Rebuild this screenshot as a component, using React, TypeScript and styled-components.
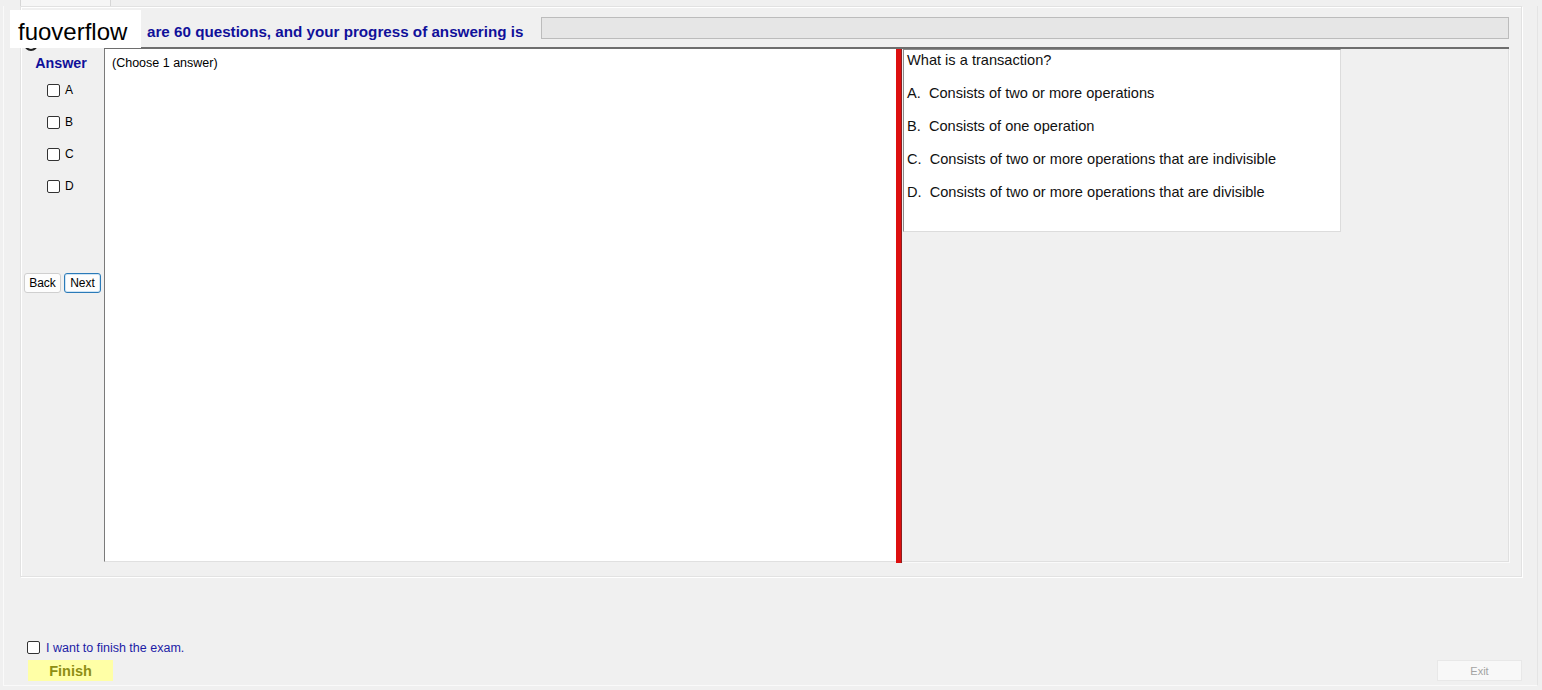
import React from "react";
import styled, { createGlobalStyle } from "styled-components";

const GlobalStyle = createGlobalStyle`
  html, body {
    margin: 0;
    padding: 0;
    background: #f0f0f0;
  }
  body {
    font-family: "Liberation Sans", Arial, sans-serif;
    color: #000;
  }
`;

const Screen = styled.div`
  position: relative;
  width: 1542px;
  height: 690px;
  background: #f0f0f0;
  overflow: hidden;
`;

const TabStrip = styled.div`
  height: 6px;
  display: flex;
`;

const Tab = styled.div`
  margin-left: 20px;
  width: 89px;
  height: 6px;
  background: #f6f6f6;
  border-left: 1px solid #d6d6d6;
  border-right: 1px solid #d6d6d6;
`;

const Shell = styled.div`
  margin-left: 3px;
  width: 1535px;
  height: 680px;
  box-sizing: border-box;
  padding: 0 15px 0 16px;
  border-left: 1px solid #fafafa;
  border-right: 1px solid #e4e4e4;
  border-bottom: 1px solid #fafafa;
  display: flex;
  flex-direction: column;
`;

const Group = styled.div`
  width: 1502px;
  height: 571px;
  box-sizing: border-box;
  border: 1px solid #e2e2e2;
  box-shadow: inset 1px 1px 0 #fff, 1px 1px 0 #fff;
  display: flex;
  flex-direction: column;
`;

const HeaderRow = styled.div`
  margin-top: 10px;
  height: 22px;
  display: flex;
  align-items: stretch;
`;

const Title = styled.div`
  width: 520px;
  box-sizing: border-box;
  padding: 4px 0 0 126px;
  white-space: nowrap;
  font-weight: bold;
  font-size: 15.2px;
  line-height: 22px;
  color: #10109a;
`;

const Progress = styled.div`
  flex: 1;
  margin-right: 12px;
  box-sizing: border-box;
  background: #e6e6e6;
  border: 1px solid #bcbcbc;
`;

const Body = styled.div`
  margin-top: 8px;
  height: 515px;
  display: flex;
`;

const AnswerColumn = styled.div`
  width: 83px;
  display: flex;
  flex-direction: column;
`;

const AnswerHeading = styled.div`
  margin-top: 8px;
  padding-right: 3px;
  text-align: center;
  font-weight: bold;
  font-size: 14.3px;
  line-height: 16px;
  color: #10109a;
`;

const OptionList = styled.div`
  margin-top: 3px;
  display: flex;
  flex-direction: column;
`;

const OptionRow = styled.label`
  height: 32px;
  padding-left: 26px;
  display: flex;
  align-items: center;
  gap: 5px;
  font-size: 12px;
  color: #000;
`;

const Box = styled.span`
  display: inline-block;
  width: 11px;
  height: 11px;
  border: 1px solid #333;
  border-radius: 2px;
  background: #fff;
`;

const NavRow = styled.div`
  margin-top: 71px;
  padding-left: 3px;
  display: flex;
  gap: 3px;
`;

const NavButton = styled.button<{ $focused?: boolean }>`
  width: 37px;
  height: 20px;
  padding: 0;
  box-sizing: border-box;
  font-family: "Liberation Sans", Arial, sans-serif;
  font-size: 12px;
  color: #000;
  background: #fdfdfd;
  border: 1px solid ${(p) => (p.$focused ? "#2a7ab8" : "#cfcfcf")};
  border-radius: 3px;
  box-shadow: ${(p) => (p.$focused ? "inset 0 0 0 1px #cfe4f4" : "none")};
`;

const Content = styled.div`
  flex: 1;
  margin-right: 12px;
  display: flex;
  border-top: 2px solid #6e6e6e;
`;

const AnswerPanel = styled.div`
  width: 792px;
  background: #fff;
  border-left: 1px solid #7a7a7a;
  border-bottom: 1px solid #e0e0e0;
  padding: 7px 0 0 7px;
  box-sizing: border-box;
  font-size: 12.5px;
  line-height: 14px;
`;

const Splitter = styled.div`
  width: 5px;
  background: #dd0f0f;
  border-right: 1px solid #8a2020;
  margin-bottom: -1px;
`;

const QuestionPane = styled.div`
  flex: 1;
  background: #f0f0f0;
  border-right: 1px solid #e0e0e0;
  border-bottom: 1px solid #e0e0e0;
  box-shadow: 1px 1px 0 #fafafa;
`;

const QuestionBox = styled.div`
  margin-left: 1px;
  width: 438px;
  height: 183px;
  box-sizing: border-box;
  background: #fff;
  border-left: 1px solid #8c8c8c;
  border-top: 1px solid #8c8c8c;
  border-right: 1px solid #dcdcdc;
  border-bottom: 1px solid #dcdcdc;
  padding-left: 3px;
  font-size: 14.6px;
  color: #111;
`;

const Line = styled.div`
  height: 22px;
  line-height: 20px;
  margin-bottom: 11px;
  white-space: pre;
`;

const Footer = styled.div`
  display: flex;
  flex-direction: column;
`;

const FinishCheck = styled.label`
  margin-top: 64px;
  margin-left: 7px;
  display: flex;
  align-items: center;
  gap: 6px;
  height: 13px;
  font-size: 12.5px;
  color: #1c1ca6;
`;

const ActionRow = styled.div`
  margin-top: 6px;
  display: flex;
  justify-content: space-between;
`;

const FinishButton = styled.button`
  margin-left: 8px;
  width: 85px;
  height: 21px;
  padding: 0;
  border: none;
  background: #ffffa6;
  font-family: "Liberation Sans", Arial, sans-serif;
  font-weight: bold;
  font-size: 14.5px;
  color: #8e8e14;
`;

const ExitButton = styled.button`
  width: 85px;
  height: 21px;
  padding: 0;
  box-sizing: border-box;
  border: 1px solid #e8e8e8;
  background: #f8f8f8;
  font-family: "Liberation Sans", Arial, sans-serif;
  font-size: 11px;
  color: #a3a3a3;
`;

const Watermark = styled.div`
  position: absolute;
  left: 10px;
  top: 10px;
  width: 131px;
  height: 38px;
  box-sizing: border-box;
  padding: 3px 0 0 8px;
  background: #fff;
  font-size: 24px;
  line-height: 38px;
  color: #000;
  overflow: hidden;
`;

const StatusDot = styled.span`
  position: absolute;
  left: 24px;
  top: 37px;
  width: 10px;
  height: 10px;
  border: 2px solid #222;
  border-radius: 50%;
`;

const options = ["A", "B", "C", "D"];

const choices = [
  "A.  Consists of two or more operations",
  "B.  Consists of one operation",
  "C.  Consists of two or more operations that are indivisible",
  "D.  Consists of two or more operations that are divisible",
];

const App: React.FC = () => {
  return (
    <>
      <GlobalStyle />
      <Screen>
        <TabStrip>
          <Tab />
        </TabStrip>
        <Shell>
          <Group>
            <HeaderRow>
              <Title>are 60 questions, and your progress of answering is</Title>
              <Progress />
            </HeaderRow>
            <Body>
              <AnswerColumn>
                <AnswerHeading>Answer</AnswerHeading>
                <OptionList>
                  {options.map((o) => (
                    <OptionRow key={o}>
                      <Box />
                      {o}
                    </OptionRow>
                  ))}
                </OptionList>
                <NavRow>
                  <NavButton>Back</NavButton>
                  <NavButton $focused>Next</NavButton>
                </NavRow>
              </AnswerColumn>
              <Content>
                <AnswerPanel>(Choose 1 answer)</AnswerPanel>
                <Splitter />
                <QuestionPane>
                  <QuestionBox>
                    <Line>What is a transaction?</Line>
                    {choices.map((c) => (
                      <Line key={c}>{c}</Line>
                    ))}
                  </QuestionBox>
                </QuestionPane>
              </Content>
            </Body>
          </Group>
          <Footer>
            <FinishCheck>
              <Box />
              I want to finish the exam.
            </FinishCheck>
            <ActionRow>
              <FinishButton>Finish</FinishButton>
              <ExitButton>Exit</ExitButton>
            </ActionRow>
          </Footer>
        </Shell>
        <StatusDot />
        <Watermark>fuoverflow</Watermark>
      </Screen>
    </>
  );
};

export default App;
